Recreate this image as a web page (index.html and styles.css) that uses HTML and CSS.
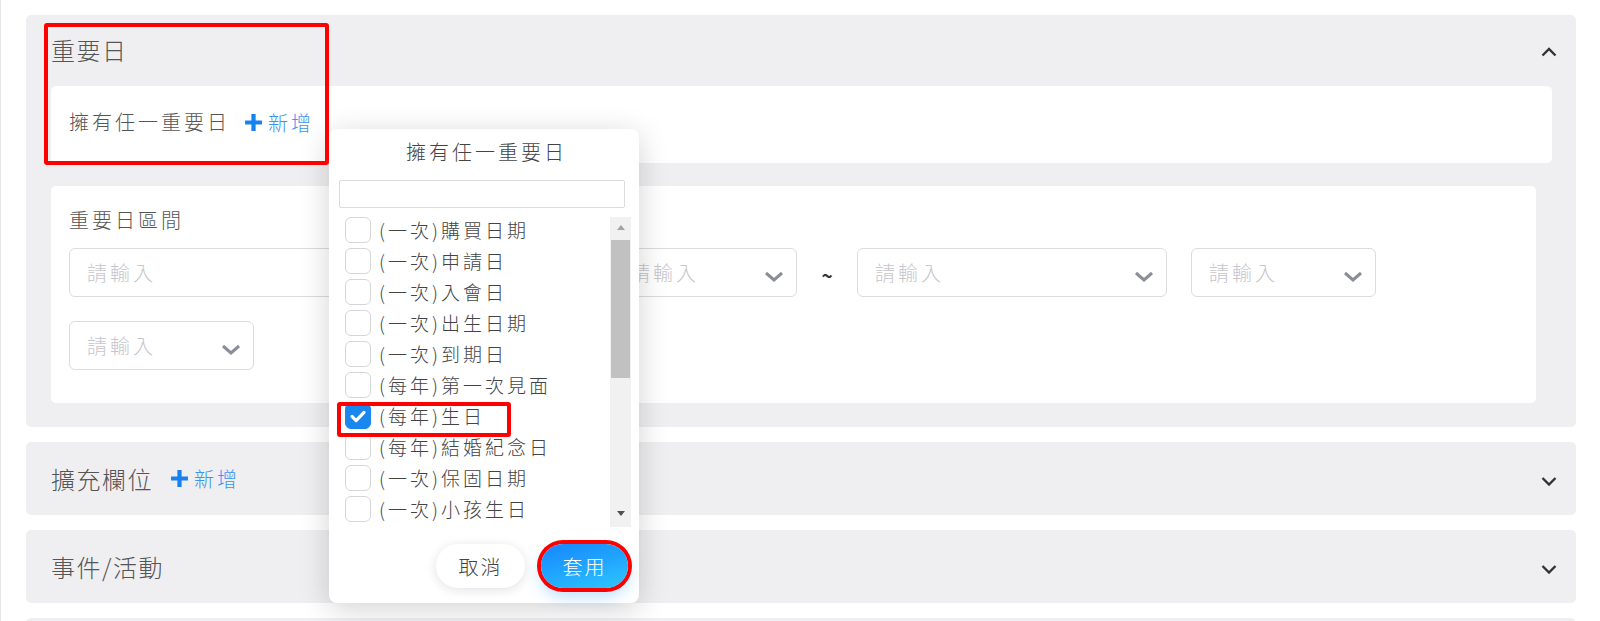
FILE: index.html
```html
<!DOCTYPE html>
<html lang="zh-Hant">
<head>
	<meta charset="UTF-8">
	<title>重要日</title>
	<link rel="stylesheet" href="styles.css">
</head>
<body>
	<div class="page">

		<section class="panel panel-open">
			<div class="panel-head">
				<span class="panel-title">重要日</span>
				<svg class="chev-head" viewBox="0 0 16 10"><path d="M1.5 8.5 8 2l6.5 6.5"/></svg>
			</div>

			<div class="card card-any">
				<span class="label">擁有任一重要日</span>
				<a class="add" href="#"><svg class="plus" viewBox="0 0 18 18"><path d="M9 1v16M1 9h16"/></svg>新增</a>
			</div>

			<div class="card card-range">
				<div class="label">重要日區間</div>
				<div class="fields">
					<div class="field field-date"><span>請輸入</span><svg class="chev" viewBox="0 0 20 11"><path d="M2 2l8 7 8-7"/></svg></div>
					<!-- this one sits fully under the open dropdown -->
					<div class="field field-time"><span></span><svg class="chev" viewBox="0 0 20 11"><path d="M2 2l8 7 8-7"/></svg></div>
					<div class="field field-time"><span>請輸入</span><svg class="chev" viewBox="0 0 20 11"><path d="M2 2l8 7 8-7"/></svg></div>
					<span class="tilde">~</span>
					<div class="field field-date"><span>請輸入</span><svg class="chev" viewBox="0 0 20 11"><path d="M2 2l8 7 8-7"/></svg></div>
					<div class="field field-time"><span>請輸入</span><svg class="chev" viewBox="0 0 20 11"><path d="M2 2l8 7 8-7"/></svg></div>
					<div class="field field-time"><span>請輸入</span><svg class="chev" viewBox="0 0 20 11"><path d="M2 2l8 7 8-7"/></svg></div>
				</div>
			</div>
		</section>

		<section class="panel">
			<span class="panel-title">擴充欄位</span>
			<a class="add add-head" href="#"><svg class="plus" viewBox="0 0 18 18"><path d="M9 1v16M1 9h16"/></svg>新增</a>
			<svg class="chev-head" viewBox="0 0 16 10"><path d="M1.5 2 8 8.5 14.5 2"/></svg>
		</section>

		<section class="panel">
			<span class="panel-title">事件/活動</span>
			<svg class="chev-head" viewBox="0 0 16 10"><path d="M1.5 2 8 8.5 14.5 2"/></svg>
		</section>

		<section class="panel"></section>

		<!-- dropdown -->
		<div class="picker">
			<div class="picker-title">擁有任一重要日</div>
			<div class="picker-search"></div>
			<div class="list-wrap">
				<div class="list">
					<div class="row"><span class="box"></span>(一次)購買日期</div>
					<div class="row"><span class="box"></span>(一次)申請日</div>
					<div class="row"><span class="box"></span>(一次)入會日</div>
					<div class="row"><span class="box"></span>(一次)出生日期</div>
					<div class="row"><span class="box"></span>(一次)到期日</div>
					<div class="row"><span class="box"></span>(每年)第一次見面</div>
					<div class="row"><span class="box checked"><svg viewBox="0 0 26 26"><path d="M6.5 13.5l4.5 4.5 8.5-9"/></svg></span>(每年)生日</div>
					<div class="row"><span class="box"></span>(每年)結婚紀念日</div>
					<div class="row"><span class="box"></span>(一次)保固日期</div>
					<div class="row"><span class="box"></span>(一次)小孩生日</div>
				</div>
				<div class="scrollbar">
					<div class="sb-btn"><span class="arrow-up"></span></div>
					<div class="sb-track"><div class="sb-thumb"></div></div>
					<div class="sb-btn"><span class="arrow-down"></span></div>
				</div>
			</div>
			<div class="picker-foot">
				<button class="btn btn-cancel">取消</button>
				<button class="btn btn-apply">套用</button>
			</div>
		</div>

		<!-- annotations -->
		<div class="mark mark-any"></div>
		<div class="mark mark-row"></div>

	</div>
</body>
</html>
```
FILE: styles.css
```css
* {
	box-sizing: border-box;
}
body {
	margin: 0;
	background: #fff;
	font-family: "Noto Sans CJK TC", "Noto Sans", sans-serif;
	font-weight: 300;
	color: #555;
	overflow: hidden;
}
.page {
	position: relative;
	height: 621px;
	padding: 15px 24px 0 25px;
	border-left: 1px solid #e6e6e8;
}

/* panels */
.panel {
	background: #efeff1;
	border-radius: 5px;
	margin-bottom: 15px;
	height: 73px;
	display: flex;
	align-items: center;
	padding: 0 19px 0 25px;
}
.panel-open {
	display: block;
	height: auto;
	padding: 0 24px 24px 25px;
}
.panel-head {
	height: 68px;
	margin: 0 -5px 3px 0;
	display: flex;
	align-items: center;
	justify-content: space-between;
}
.panel-title {
	font-size: 24px;
	letter-spacing: 1.5px;
	color: #555;
}
.chev-head {
	width: 16px;
	height: 10px;
	margin-left: auto;
	margin-top: 5px;
	fill: none;
	stroke: #333;
	stroke-width: 2.4;
}

/* cards */
.card {
	background: #fff;
	border-radius: 5px;
}
.card-any {
	height: 77px;
	display: flex;
	align-items: center;
	padding: 0 18px 5px;
}
.card-range {
	margin: 23px 16px 0 0;
	padding: 20px 18px 33px;
}
.label {
	font-size: 20px;
	line-height: 28px;
	letter-spacing: 3px;
	color: #555;
}
.card-range .label {
	margin-bottom: 14px;
}
.add {
	display: inline-flex;
	align-items: center;
	margin-left: 14px;
	font-size: 20px;
	letter-spacing: 3px;
	color: #3a95ef;
	text-decoration: none;
}
.add-head {
	margin-left: 17px;
}
.plus {
	width: 19px;
	height: 19px;
	margin-right: 5px;
	fill: none;
	stroke: #1681f0;
	stroke-width: 4;
}

/* fields */
.fields {
	display: flex;
	flex-wrap: wrap;
	align-items: center;
	gap: 24px;
}
.field {
	height: 49px;
	border: 1px solid #dcdce0;
	border-radius: 6px;
	display: flex;
	align-items: center;
	justify-content: space-between;
	padding: 0 12px 0 17px;
	font-size: 20px;
	letter-spacing: 3px;
	color: #c6c6cc;
}
.field-date {
	width: 310px;
}
.field-time {
	width: 185px;
}
.chev {
	width: 20px;
	height: 11px;
	margin-top: 8px;
	fill: none;
	stroke: #8b8d98;
	stroke-width: 3;
}
.tilde {
	width: 12px;
	text-align: center;
	font-size: 19px;
	font-weight: bold;
	color: #333;
	margin-top: 4px;
}

/* dropdown */
.picker {
	position: absolute;
	left: 328px;
	top: 129px;
	width: 310px;
	height: 474px;
	background: #fff;
	border-radius: 8px;
	box-shadow: 0 6px 30px rgba(0, 0, 0, 0.18);
	padding: 0 8px 0 10px;
	display: flex;
	flex-direction: column;
}
.picker-title {
	height: 45px;
	display: flex;
	align-items: center;
	justify-content: center;
	font-size: 20px;
	letter-spacing: 3px;
	color: #444;
	padding-left: 3px;
}
.picker-search {
	height: 28px;
	width: 286px;
	margin-top: 6px;
	border: 1px solid #dcdcdc;
	border-radius: 2px;
}
.list-wrap {
	display: flex;
	height: 310px;
	margin-top: 9px;
}
.list {
	flex: 1;
	padding-left: 6px;
	overflow: hidden;
}
.row {
	height: 31px;
	display: flex;
	align-items: center;
	font-size: 19px;
	letter-spacing: 3px;
	color: #444;
	white-space: nowrap;
}
.row:first-child {
	margin-top: -3px;
}
.box {
	width: 26px;
	height: 26px;
	margin-right: 8px;
	border: 1px solid #d6d6da;
	border-radius: 6px;
	background: #fff;
	flex-shrink: 0;
}
.box.checked {
	background: #1a87ee;
	border-color: #1a87ee;
}
.box svg {
	width: 24px;
	height: 24px;
	fill: none;
	stroke: #fff;
	stroke-width: 3.4;
	stroke-linecap: round;
	stroke-linejoin: round;
}
.scrollbar {
	width: 21px;
	background: #f1f1f1;
	display: flex;
	flex-direction: column;
}
.sb-btn {
	height: 21px;
	display: flex;
	align-items: center;
	justify-content: center;
}
.arrow-up {
	border-left: 4px solid transparent;
	border-right: 4px solid transparent;
	border-bottom: 5px solid #a3a3a3;
}
.arrow-down {
	border-left: 4px solid transparent;
	border-right: 4px solid transparent;
	border-top: 5px solid #505050;
	margin-bottom: 6px;
}
.sb-track {
	flex: 1;
}
.sb-thumb {
	margin: 2px 0 0 1px;
	width: 19px;
	height: 138px;
	background: #c1c1c1;
}
.picker-foot {
	display: flex;
	justify-content: flex-end;
	gap: 16px;
	margin-top: 17px;
	padding-right: 3px;
}
.btn {
	height: 44px;
	border: none;
	border-radius: 22px;
	font-family: inherit;
	font-weight: 300;
	font-size: 20px;
	letter-spacing: 2px;
	padding: 0;
}
.btn-cancel {
	width: 89px;
	background: #fff;
	color: #444;
	box-shadow: 0 2px 12px rgba(0, 0, 0, 0.12);
}
.btn-apply {
	width: 87px;
	color: #fff;
	background: linear-gradient(165deg, #1685ff, #2cc6ff);
	box-shadow: 0 0 0 4px #f00, 0 8px 16px rgba(40, 160, 255, 0.35);
}

/* red annotation boxes */
.mark {
	position: absolute;
	border: 4px solid #f00;
	border-radius: 3px;
	pointer-events: none;
}
.mark-any {
	left: 43px;
	top: 23px;
	width: 285px;
	height: 142px;
}
.mark-row {
	left: 336px;
	top: 402px;
	width: 174px;
	height: 35px;
}
```
